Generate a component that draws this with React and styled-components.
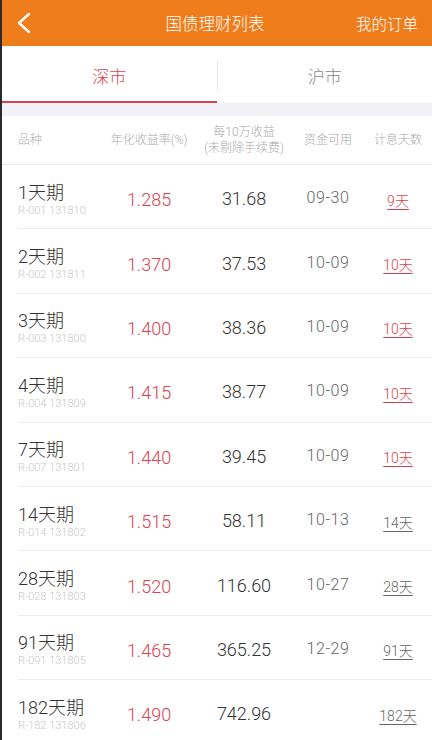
import React from "react";
import styled, { createGlobalStyle } from "styled-components";

const GlobalStyle = createGlobalStyle`
  html, body { margin: 0; padding: 0; background: #fff; }
  body {
    font-family: "Helvetica Neue", Roboto, "Noto Sans CJK SC", sans-serif;
    -webkit-font-smoothing: antialiased;
  }
`;

const rows = [
  { name: "1天期", code: "R-001 131810", rate: "1.285", income: "31.68", date: "09-30", days: "9天", hot: true },
  { name: "2天期", code: "R-002 131811", rate: "1.370", income: "37.53", date: "10-09", days: "10天", hot: true },
  { name: "3天期", code: "R-003 131800", rate: "1.400", income: "38.36", date: "10-09", days: "10天", hot: true },
  { name: "4天期", code: "R-004 131809", rate: "1.415", income: "38.77", date: "10-09", days: "10天", hot: true },
  { name: "7天期", code: "R-007 131801", rate: "1.440", income: "39.45", date: "10-09", days: "10天", hot: true },
  { name: "14天期", code: "R-014 131802", rate: "1.515", income: "58.11", date: "10-13", days: "14天" },
  { name: "28天期", code: "R-028 131803", rate: "1.520", income: "116.60", date: "10-27", days: "28天" },
  { name: "91天期", code: "R-091 131805", rate: "1.465", income: "365.25", date: "12-29", days: "91天" },
  { name: "182天期", code: "R-182 131806", rate: "1.490", income: "742.96", date: "", days: "182天" },
];

const App = () => {
  return (
    <Page>
      <GlobalStyle />
      <TopBar>
        <BackButton>
          <svg width="16" height="22" viewBox="0 0 16 22">
            <polyline points="13,2 3,11 13,20" fill="none" stroke="#fff" strokeWidth="2.4" strokeLinecap="round" strokeLinejoin="round" />
          </svg>
        </BackButton>
        <Title>国债理财列表</Title>
        <TopAction>我的订单</TopAction>
      </TopBar>
      <Tabs>
        <Tab $active>深市</Tab>
        <TabDivider />
        <Tab>沪市</Tab>
      </Tabs>
      <Gap />
      <HeadRow>
        <HeadCell $left>品种</HeadCell>
        <HeadCell>年化收益率(%)</HeadCell>
        <HeadCell>
          每10万收益
          <br />
          (未剔除手续费)
        </HeadCell>
        <HeadCell>资金可用</HeadCell>
        <HeadCell>计息天数</HeadCell>
      </HeadRow>
      {rows.map((r) => (
        <Row key={r.code}>
          <NameCell>
            <Name>{r.name}</Name>
            <Code>{r.code}</Code>
          </NameCell>
          <Rate>{r.rate}</Rate>
          <Income>{r.income}</Income>
          <DateCell>{r.date}</DateCell>
          <Days $hot={r.hot}>{r.days}</Days>
        </Row>
      ))}
    </Page>
  );
};

const Page = styled.div`
  width: 432px;
  height: 740px;
  overflow: hidden;
  background: #fff;
  box-sizing: border-box;
  border-left: 2px solid #2a2a2a;
`;

const TopBar = styled.header`
  height: 46px;
  background: #ef7d1c;
  display: grid;
  grid-template-columns: 80px 1fr 80px;
  align-items: center;
  color: #fff;
`;

const BackButton = styled.div`
  display: flex;
  align-items: center;
  padding-left: 14px;
  svg { display: block; }
`;

const Title = styled.div`
  text-align: center;
  font-size: 16.5px;
  font-weight: 300;
  margin-left: -4px;
`;

const TopAction = styled.div`
  font-size: 15.5px;
  font-weight: 300;
  text-align: right;
  padding-right: 14px;
  white-space: nowrap;
`;

const Tabs = styled.div`
  height: 57px;
  display: flex;
  align-items: stretch;
`;

const Tab = styled.div`
  flex: 1;
  display: flex;
  align-items: center;
  justify-content: center;
  font-size: 17px;
  font-weight: 300;
  color: ${(p) => (p.$active ? "#d9434f" : "#888")};
  border-bottom: 2px solid ${(p) => (p.$active ? "#d9434f" : "transparent")};
  padding-top: 3px;
`;

const TabDivider = styled.div`
  width: 1px;
  background: #e6e6e6;
  margin: 15px 0 13px;
`;

const Gap = styled.div`
  height: 13px;
  background: #f2f2f6;
`;

const columns = "82px 98px 92px 76px 64px";

const HeadRow = styled.div`
  height: 48px;
  display: grid;
  grid-template-columns: ${columns};
  padding-left: 16px;
  align-items: center;
  border-bottom: 1px solid #ececec;
`;

const HeadCell = styled.div`
  font-size: 12px;
  line-height: 16px;
  font-weight: 300;
  color: #aaa;
  text-align: ${(p) => (p.$left ? "left" : "center")};
  white-space: nowrap;
`;

const Row = styled.div`
  height: 63.4px;
  margin-left: 16px;
  display: grid;
  grid-template-columns: ${columns};
  align-items: center;
  border-bottom: 1px solid #ececec;
`;

const NameCell = styled.div`
  display: flex;
  flex-direction: column;
  padding-top: 6px;
`;

const Name = styled.div`
  font-size: 18px;
  line-height: 22px;
  font-weight: 300;
  color: #333;
  white-space: nowrap;
`;

const Code = styled.div`
  font-size: 11px;
  line-height: 14px;
  font-weight: 300;
  color: #c8c8c8;
  white-space: nowrap;
`;

const Rate = styled.div`
  text-align: center;
  font-size: 18px;
  font-weight: 300;
  color: #d9434f;
  padding-top: 6px;
`;

const Income = styled.div`
  text-align: center;
  font-size: 18px;
  font-weight: 300;
  color: #333;
  padding-top: 4px;
`;

const DateCell = styled.div`
  text-align: center;
  font-size: 16px;
  font-weight: 300;
  letter-spacing: 0.6px;
  color: #666;
  padding-top: 2px;
`;

const Days = styled.div`
  text-align: center;
  font-size: 14px;
  font-weight: 300;
  color: ${(p) => (p.$hot ? "#d9434f" : "#666")};
  text-decoration: underline;
  text-underline-offset: 3px;
  padding-top: 6px;
`;

export default App;
